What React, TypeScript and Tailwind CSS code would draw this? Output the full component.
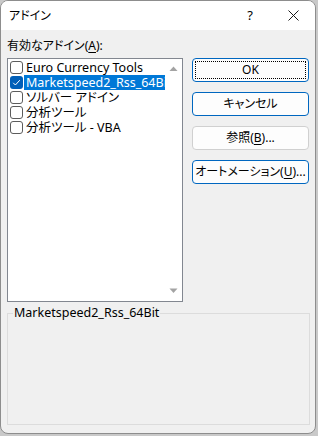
import React from "react";

const ui = { fontFamily: '"Noto Sans", "Noto Sans CJK JP", sans-serif' };

const addins = [
  { name: "Euro Currency Tools", checked: false },
  { name: "Marketspeed2_Rss_64Bit", checked: true },
  { name: "ソルバー アドイン", checked: false },
  { name: "分析ツール", checked: false },
  { name: "分析ツール - VBA", checked: false },
];

function Check({ checked }: { checked: boolean }) {
  if (checked) {
    return (
      <span className="flex h-[13px] w-[13px] shrink-0 items-center justify-center rounded-[3px] bg-[#005fb8]">
        <svg width="9" height="9" viewBox="0 0 9 9">
          <path d="M1.2 4.8 L3.4 7 L7.8 2.2" fill="none" stroke="white" strokeWidth="1" />
        </svg>
      </span>
    );
  }
  return <span className="h-[13px] w-[13px] shrink-0 rounded-[3px] border border-[#5c5c5c] bg-white" />;
}

function Btn({ children, tone, focus }: { children: React.ReactNode; tone: "blue" | "gray"; focus?: boolean }) {
  return (
    <div
      className={
        "flex h-[24px] w-[117px] items-center justify-center rounded-[4px] border bg-[#fdfdfd] p-[2px] text-[12px] whitespace-nowrap text-black " +
        (tone === "blue" ? "border-[#0067c0]" : "border-[#d0d0d0]")
      }
    >
      <div
        className={
          "flex h-full w-full items-center justify-center " +
          (focus ? "border border-dotted border-black" : "")
        }
      >
        {children}
      </div>
    </div>
  );
}

export default function App() {
  return (
    <div className="h-[436px] w-[318px] bg-[#c9c9c9] [font-feature-settings:'palt']" style={ui}>
      <div className="flex h-[434px] w-[316px] flex-col overflow-hidden rounded-[8px] border border-[#8d8d8d] bg-[#f0f0f0]">
        {/* title bar */}
        <div className="flex h-[29px] shrink-0 items-center bg-white pl-[8px] text-[12px] text-black">
          <span className="flex-1 pt-[1px]">アドイン</span>
          <span className="w-[20px] text-center text-[13px]">?</span>
          <span className="mr-[9px] ml-[20px] flex w-[26px] items-center justify-center">
            <svg width="11" height="11" viewBox="0 0 11 11">
              <path d="M0.5 0.5 L10.5 10.5 M10.5 0.5 L0.5 10.5" stroke="#1a1a1a" strokeWidth="1" />
            </svg>
          </span>
        </div>

        <div className="flex flex-col pl-[6px]">
          <div className="mt-[8px] h-[15px] text-[12px] leading-[15px] text-black">
            有効なアドイン(<span className="underline underline-offset-2">A</span>):
          </div>

          <div className="mt-[5px] flex">
            {/* list box */}
            <div className="flex h-[244px] w-[176px] border border-[#828790] bg-white">
              <div className="w-[157px] overflow-hidden pt-[1px] pl-[2px]">
                {addins.map((a) => (
                  <div key={a.name} className="flex h-[15px] items-center">
                    <Check checked={a.checked} />
                    <span
                      className={
                        "ml-[1px] h-[15px] whitespace-nowrap pl-[2px] text-[12.5px] leading-[15px] " +
                        (a.checked ? "w-full bg-[#0078d7] text-white" : "text-black")
                      }
                    >
                      {a.name}
                    </span>
                  </div>
                ))}
              </div>
              <div className="flex w-[17px] flex-col items-center justify-between py-[7px]">
                <svg width="9" height="6" viewBox="0 0 9 6">
                  <path d="M4.5 0.5 L8.5 5 L0.5 5 Z" fill="#a3a3a3" />
                </svg>
                <svg width="9" height="6" viewBox="0 0 9 6">
                  <path d="M0.5 0.5 L8.5 0.5 L4.5 5 Z" fill="#a3a3a3" />
                </svg>
              </div>
            </div>

            {/* buttons */}
            <div className="ml-[9px] flex flex-col gap-[10px]">
              <Btn tone="blue" focus>
                OK
              </Btn>
              <Btn tone="blue">キャンセル</Btn>
              <Btn tone="gray">
                参照(<span className="underline underline-offset-2">B</span>)...
              </Btn>
              <Btn tone="blue">
                オートメーション(<span className="underline underline-offset-2">U</span>)...
              </Btn>
            </div>
          </div>

          {/* group box */}
          <div className="relative mt-[11px] h-[112px] w-[303px] border border-[#dcdcdc]">
            <span className="absolute -top-[9px] left-[5px] bg-[#f0f0f0] px-[1px] text-[12.5px] leading-[16px] text-black">
              Marketspeed2_Rss_64Bit
            </span>
          </div>
        </div>
      </div>
    </div>
  );
}
